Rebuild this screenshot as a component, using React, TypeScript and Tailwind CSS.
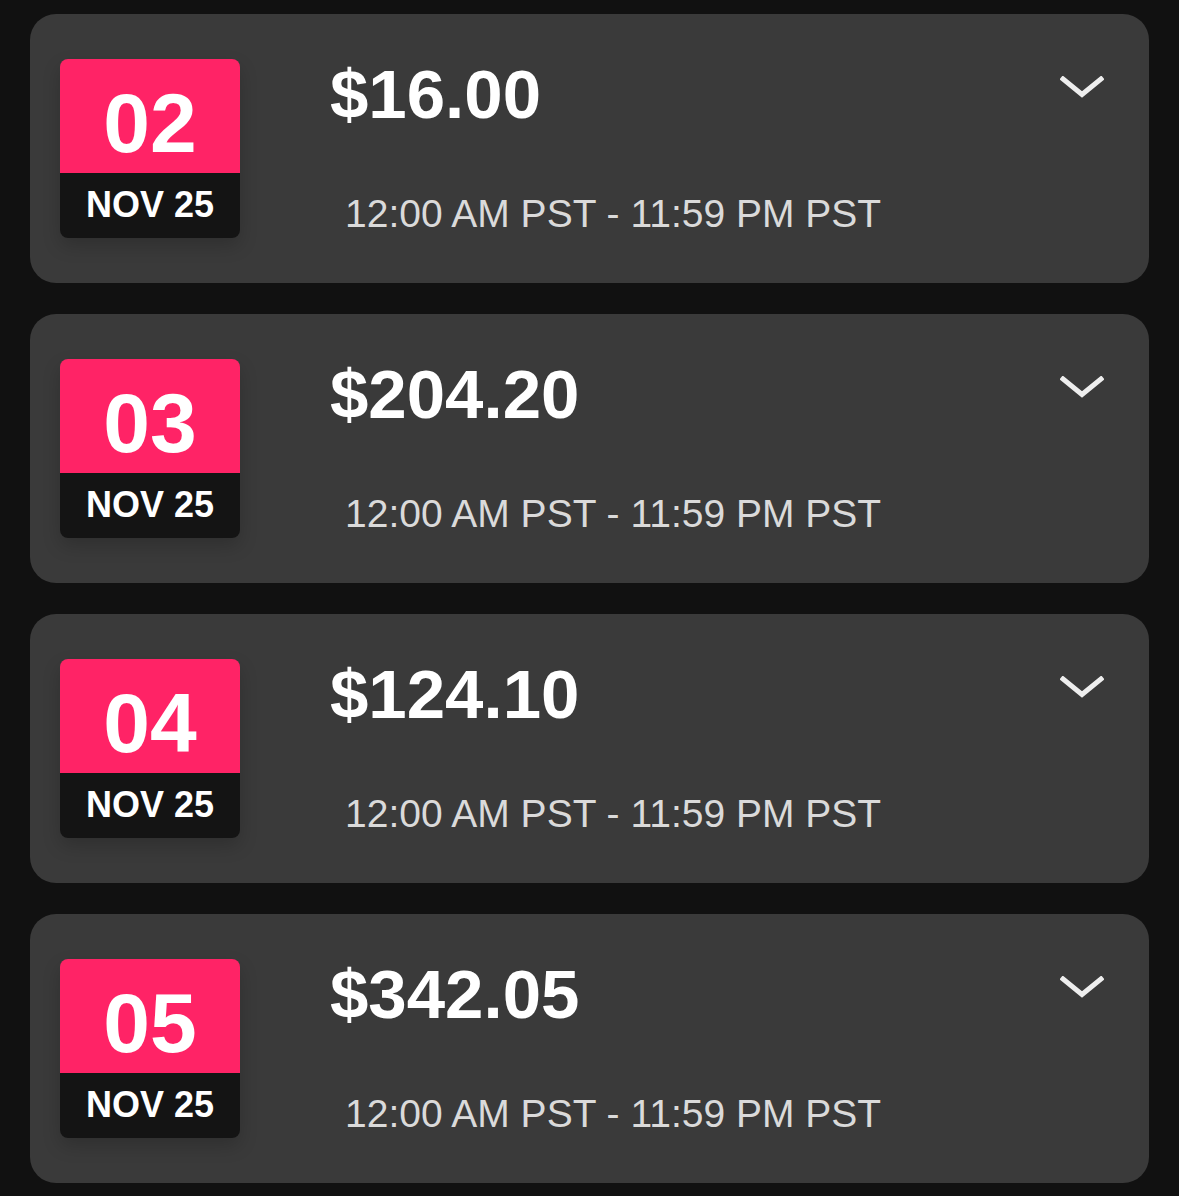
import React from "react";

type Entry = { day: string; month: string; amount: string };

const entries: Entry[] = [
  { day: "02", month: "NOV 25", amount: "$16.00" },
  { day: "03", month: "NOV 25", amount: "$204.20" },
  { day: "04", month: "NOV 25", amount: "$124.10" },
  { day: "05", month: "NOV 25", amount: "$342.05" },
];

const Chevron = () => (
  <svg width="44" height="22" viewBox="0 0 44 22" fill="none">
    <polyline
      points="3,3 22,18.5 41,3"
      stroke="#eeeeee"
      strokeWidth="5"
      strokeLinecap="square"
      strokeLinejoin="miter"
    />
  </svg>
);

const DateBadge = ({ day, month }: { day: string; month: string }) => (
  <div className="flex flex-col w-[180px] h-[179px] rounded-[8px] overflow-hidden shrink-0 shadow-[0_8px_18px_rgba(0,0,0,0.18)]">
    <div className="h-[114px] bg-[#ff2366] flex justify-center pt-[22px]">
      <span className="text-white font-bold text-[84px] leading-none tracking-[0]">{day}</span>
    </div>
    <div className="flex-1 bg-[#141414] flex justify-center pt-[14px]">
      <span className="text-white font-bold text-[36px] leading-none tracking-[0]">{month}</span>
    </div>
  </div>
);

const DayCard = ({ entry }: { entry: Entry }) => (
  <div className="flex items-start bg-[#3a3a3a] rounded-[26px] pl-[30px] pr-[45px] py-[45px]">
    <DateBadge day={entry.day} month={entry.month} />
    <div className="flex flex-col ml-[90px] mt-[1px] flex-1">
      <div className="text-white font-bold text-[69px] leading-none">{entry.amount}</div>
      <div className="ml-[15px] mt-[65px] text-[#dadada] text-[39px] leading-none whitespace-nowrap">
        12:00 AM PST - 11:59 PM PST
      </div>
    </div>
    <div className="mt-[17px]">
      <Chevron />
    </div>
  </div>
);

export default function App() {
  return (
    <div className="min-h-screen bg-[#111111] px-[30px] pt-[14px] pb-[14px] flex flex-col gap-[31px] [font-family:'Liberation_Sans',Arial,sans-serif]">
      {entries.map((e) => (
        <DayCard key={e.day} entry={e} />
      ))}
    </div>
  );
}
